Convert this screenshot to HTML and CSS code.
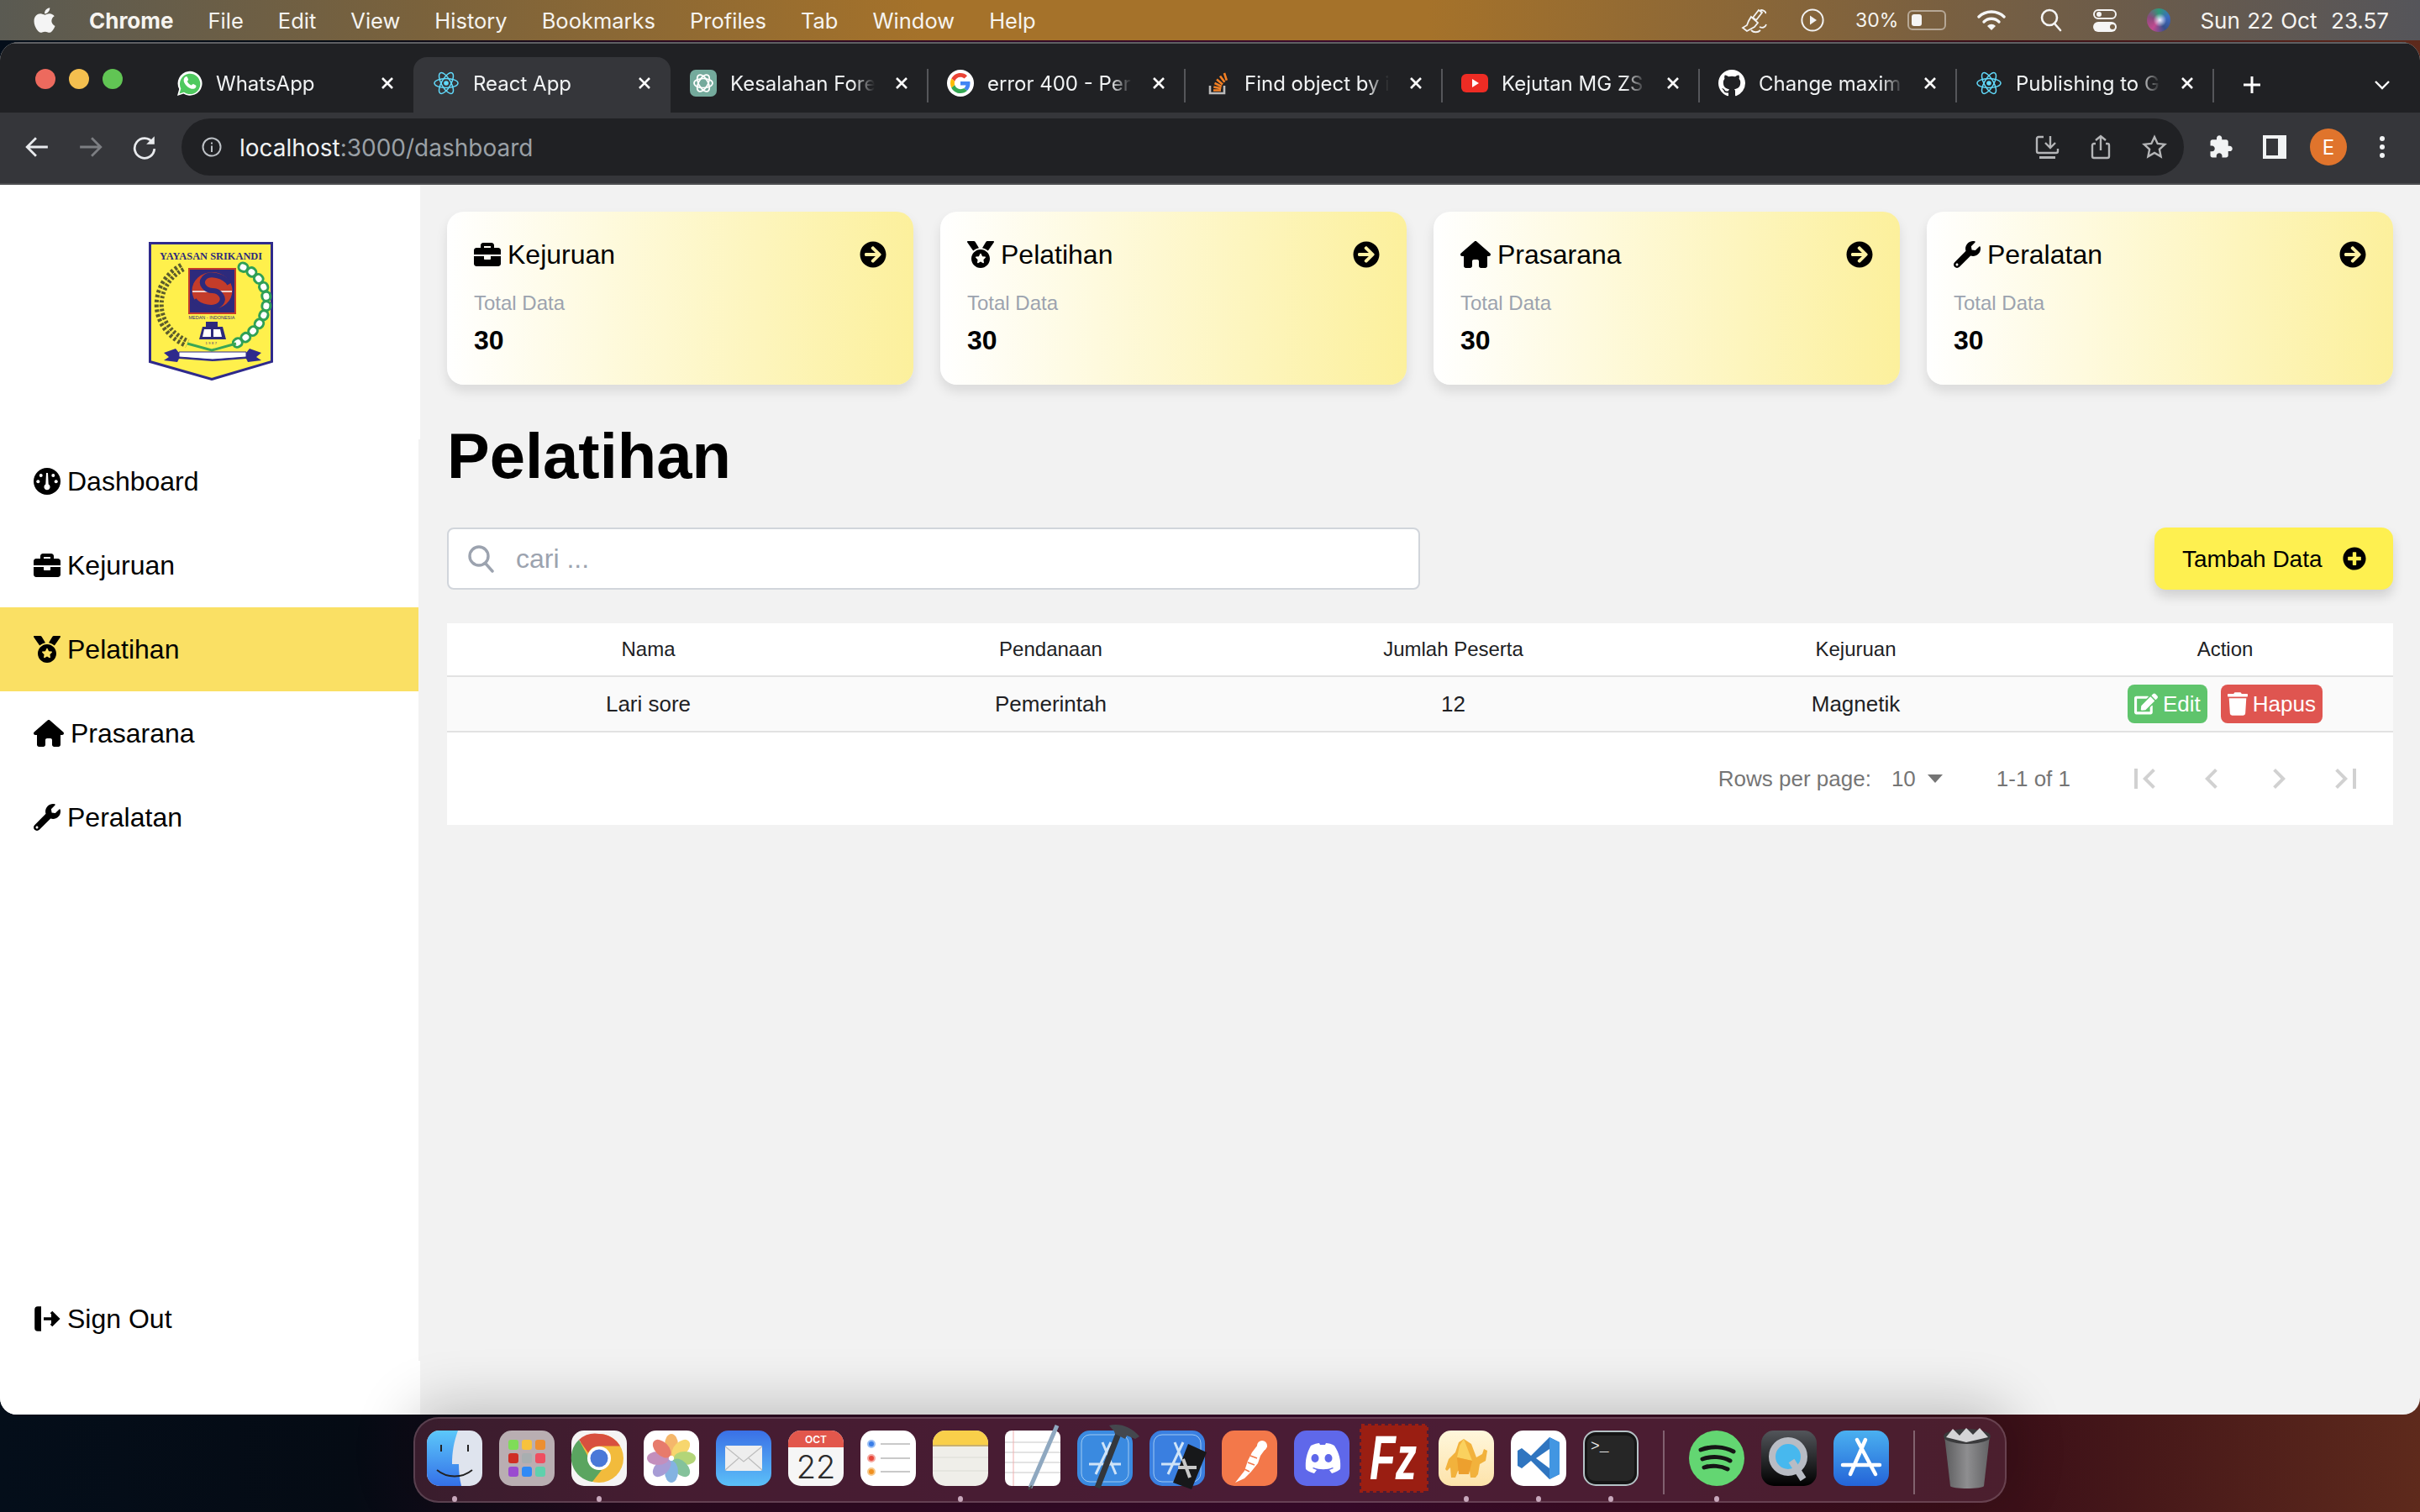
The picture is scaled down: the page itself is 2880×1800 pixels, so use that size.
FILE: index.html
```html
<!DOCTYPE html>
<html lang="en">
<head>
    <meta charset="UTF-8">
    <meta name="viewport" content="width=device-width, initial-scale=1.0">
    <title>React App</title>
    <link rel="stylesheet" href="styles.css">
</head>
<body>
    <svg class="icon-defs" xmlns="http://www.w3.org/2000/svg">
        <symbol id="i-briefcase" viewBox="0 0 512 512"><path d="M320 336c0 8.84-7.16 16-16 16h-96c-8.84 0-16-7.16-16-16v-48H0v144c0 25.6 22.4 48 48 48h416c25.6 0 48-22.4 48-48V288H320v48zm144-208h-80V80c0-25.6-22.4-48-48-48H176c-25.6 0-48 22.4-48 48v48H48c-25.6 0-48 22.4-48 48v80h512v-80c0-25.6-22.4-48-48-48zm-144 0H192V96h128v32z"/></symbol>
        <symbol id="i-medal" viewBox="0 0 512 512"><path d="M223.75 130.75L154.62 15.54A31.997 31.997 0 0 0 127.18 0H16.03C3.08 0-4.5 14.57 2.92 25.18l111.27 158.96c29.72-27.77 67.52-46.83 109.56-53.39zM495.97 0H384.82c-11.24 0-21.66 5.9-27.44 15.54l-69.13 115.21c42.04 6.56 79.84 25.62 109.56 53.38L509.08 25.18C516.5 14.57 508.92 0 495.97 0zM256 160c-97.2 0-176 78.8-176 176s78.8 176 176 176 176-78.8 176-176-78.8-176-176-176zm92.52 157.26l-37.93 36.96 8.97 52.22c1.6 9.36-8.26 16.51-16.65 12.09L256 393.88l-46.9 24.65c-8.4 4.45-18.25-2.74-16.65-12.09l8.97-52.22-37.93-36.96c-6.82-6.64-3.05-18.23 6.35-19.59l52.43-7.64 23.43-47.52c2.11-4.28 6.19-6.39 10.28-6.39 4.11 0 8.22 2.14 10.33 6.39l23.43 47.52 52.43 7.64c9.4 1.36 13.17 12.95 6.35 19.59z"/></symbol>
        <symbol id="i-home" viewBox="0 0 576 512"><path d="M575.8 255.5c0 18-15 32.1-32 32.1h-32l.7 160.2c0 2.7-.2 5.4-.5 8.1V472c0 22.1-17.9 40-40 40H456c-1.1 0-2.2 0-3.3-.1c-1.4 .1-2.8 .1-4.2 .1H416 392c-22.1 0-40-17.9-40-40V448 384c0-17.7-14.3-32-32-32H256c-17.7 0-32 14.3-32 32v64 24c0 22.1-17.9 40-40 40H160 128.100c-1.5 0-3-.1-4.5-.2c-1.2 .1-2.4 .2-3.6 .2H104c-22.1 0-40-17.900-40-40V360c0-.9 0-1.900 .1-2.800V287.600H32c-18 0-32-14-32-32.100c0-9 3-17 10-24L266.400 8c7-7 15-8 22-8s15 2 21 7L564.800 231.500c8 7 12 15 11 24z"/></symbol>
        <symbol id="i-wrench" viewBox="0 0 512 512"><path d="M507.73 109.1c-2.24-9.03-13.54-12.09-20.12-5.51l-74.36 74.36-67.88-11.31-11.31-67.88 74.36-74.36c6.62-6.62 3.43-17.9-5.66-20.16-47.38-11.74-99.55.91-136.58 37.93-39.64 39.64-50.55 97.1-34.05 147.2L18.74 402.76c-24.99 24.99-24.99 65.51 0 90.5 24.99 24.99 65.51 24.99 90.5 0l213.21-213.21c50.12 16.71 107.47 5.68 147.37-34.22 37.07-37.07 49.7-89.32 37.91-136.73zM64 472c-13.25 0-24-10.75-24-24 0-13.26 10.75-24 24-24s24 10.74 24 24c0 13.25-10.75 24-24 24z"/></symbol>
        <symbol id="i-arrow" viewBox="0 0 512 512"><path d="M256 8c137 0 248 111 248 248S393 504 256 504 8 393 8 256 119 8 256 8zm-28.9 143.6l75.5 72.4H120c-13.3 0-24 10.7-24 24v16c0 13.3 10.7 24 24 24h182.6l-75.5 72.4c-9.7 9.3-9.9 24.8-.4 34.3l11 10.9c9.4 9.4 24.6 9.4 33.9 0L404.3 273c9.4-9.4 9.4-24.6 0-33.9L271 106.3c-9.4-9.4-24.6-9.4-33.9 0l-11 10.9c-9.5 9.6-9.3 25.1.4 34.4z"/></symbol>
        <symbol id="i-atom" viewBox="0 0 32 32"><g fill="none" stroke="#61dafb" stroke-width="1.5"><ellipse cx="16" cy="16" rx="14" ry="5.5"/><ellipse cx="16" cy="16" rx="14" ry="5.5" transform="rotate(60 16 16)"/><ellipse cx="16" cy="16" rx="14" ry="5.5" transform="rotate(120 16 16)"/></g><circle cx="16" cy="16" r="2.8" fill="#61dafb"/></symbol>
        <symbol id="i-close" viewBox="0 0 18 18"><path d="M3 3l12 12M15 3L3 15" fill="none" stroke="#fff" stroke-width="2.6"/></symbol>
    </svg>

    <header class="menubar">
        <div class="menu-left">
            <svg class="apple" viewBox="0 0 384 512"><path d="M318.7 268.7c-.2-36.7 16.4-64.4 50-84.8-18.8-26.9-47.2-41.7-84.7-44.6-35.5-2.8-74.3 20.7-88.5 20.7-15 0-49.4-19.7-76.4-19.7C63.3 141.2 4 184.8 4 273.5q0 39.3 14.4 81.2c12.8 36.7 59 126.7 107.2 125.2 25.2-.6 43-17.9 75.8-17.9 31.8 0 48.3 17.9 76.4 17.9 48.6-.7 90.4-82.5 102.6-119.3-65.2-30.7-61.7-90-61.7-91.9zm-56.6-164.2c27.3-32.4 24.8-61.9 24-72.5-24.1 1.4-52 16.4-67.9 34.9-17.5 19.8-27.8 44.3-25.6 71.9 26.1 2 49.9-11.4 69.5-34.3z"/></svg>
            <span class="menu-app">Chrome</span>
            <span>File</span>
            <span>Edit</span>
            <span>View</span>
            <span>History</span>
            <span>Bookmarks</span>
            <span>Profiles</span>
            <span>Tab</span>
            <span>Window</span>
            <span>Help</span>
        </div>
        <div class="menu-right">
            <svg class="status-broom" viewBox="0 0 32 32" fill="none" stroke="#f2f2f2" stroke-width="1.8"><path d="M14 13l7-9 4 3-7 9zM12 12l8 7-4 5-9 5-5-4 5-3 2-5zM23 4c4 0 7 2 6 4M22 24c4 2 7 0 8-3M12 28c3 3 8 3 11 0"/></svg>
            <svg class="status-play" viewBox="0 0 28 28"><circle cx="14" cy="14" r="12.6" fill="none" stroke="#f2f2f2" stroke-width="2"/><path d="M11 8.5l8 5.5-8 5.5z" fill="#f2f2f2"/></svg>
            <div class="battery-group">
                <span>30%</span>
                <div class="battery"><div class="battery-level"></div></div>
            </div>
            <svg class="status-wifi" viewBox="0 0 34 26"><path d="M2 9c8-8 22-8 30 0" fill="none" stroke="#f5f5f5" stroke-width="3.4" stroke-linecap="round"/><path d="M8 15c5-5 13-5 18 0" fill="none" stroke="#f5f5f5" stroke-width="3.4" stroke-linecap="round"/><path d="M12 20c3-3 7-3 10 0l-5 5z" fill="#f5f5f5"/></svg>
            <svg class="status-search" viewBox="0 0 26 28" fill="none" stroke="#f5f5f5" stroke-width="2.6"><circle cx="11" cy="11" r="9"/><path d="M17 18l7 8" stroke-linecap="round"/></svg>
            <div class="status-control">
                <div class="toggle-off"><i></i></div>
                <div class="toggle-on"><i></i></div>
            </div>
            <div class="status-siri"></div>
            <span class="status-time">Sun 22 Oct&nbsp;&nbsp;23.57</span>
        </div>
    </header>

    <div class="window">
        <div class="tabstrip">
            <div class="lights"><i class="light-red"></i><i class="light-yellow"></i><i class="light-green"></i></div>
            <div class="tab">
                <svg class="favicon" viewBox="0 0 32 32"><path d="M2 31l2.200-8A14.500 14.500 0 1 1 9.400 28.600z" fill="#fff"/><path d="M4.500 28.500l1.800-6A12.200 12.200 0 1 1 10 26.800z" fill="#4fc95f"/><path d="M11.500 8.800c1-1 2-.8 2.400 0l1.200 2.800c.2.600-.8 1.800-1.200 2.400 1 2 2.800 3.600 4.800 4.600.8-.6 1.700-1.800 2.400-1.600l2.800 1.400c.8.500.6 1.800 0 2.800-1.400 1.800-4 2-6.400 1-3.400-1.400-6-4-7.400-7.200-1-2.500-.4-5 1.400-6.600z" fill="#fff"/></svg>
                <span class="tab-title">WhatsApp</span>
                <svg class="tab-close"><use href="#i-close"/></svg>
            </div>
            <div class="tab tab-active">
                <svg class="favicon"><use href="#i-atom"/></svg>
                <span class="tab-title">React App</span>
                <svg class="tab-close"><use href="#i-close"/></svg>
            </div>
            <div class="tab tab-sep">
                <svg class="favicon" viewBox="0 0 32 32"><rect width="32" height="32" rx="7" fill="#74aa9c"/><g fill="none" stroke="#fff" stroke-width="1.700"><ellipse cx="16" cy="16" rx="11" ry="5.500"/><ellipse cx="16" cy="16" rx="11" ry="5.500" transform="rotate(60 16 16)"/><ellipse cx="16" cy="16" rx="11" ry="5.500" transform="rotate(120 16 16)"/></g></svg>
                <span class="tab-title">Kesalahan Fore</span>
                <svg class="tab-close"><use href="#i-close"/></svg>
            </div>
            <div class="tab tab-sep">
                <svg class="favicon" viewBox="-8 -8 64 64"><circle cx="24" cy="24" r="32" fill="#fff"/><path fill="#EA4335" d="M24 9.500c3.540 0 6.710 1.220 9.210 3.600l6.850-6.850C35.900 2.380 30.470 0 24 0 14.620 0 6.510 5.380 2.560 13.220l7.980 6.190C12.430 13.720 17.740 9.500 24 9.500z"/><path fill="#4285F4" d="M46.980 24.550c0-1.570-.15-3.090-.38-4.550H24v9.020h12.940c-.58 2.960-2.260 5.480-4.780 7.180l7.730 6c4.510-4.180 7.090-10.360 7.090-17.650z"/><path fill="#FBBC05" d="M10.530 28.590c-.48-1.450-.76-2.990-.76-4.590s.27-3.140.76-4.590l-7.980-6.190C.92 16.460 0 20.120 0 24c0 3.880.92 7.540 2.560 10.780l7.970-6.190z"/><path fill="#34A853" d="M24 48c6.480 0 11.930-2.130 15.890-5.810l-7.730-6c-2.150 1.450-4.920 2.300-8.160 2.300-6.260 0-11.570-4.220-13.470-9.910l-7.980 6.190C6.510 42.620 14.620 48 24 48z"/></svg>
                <span class="tab-title">error 400 - Per</span>
                <svg class="tab-close"><use href="#i-close"/></svg>
            </div>
            <div class="tab tab-sep">
                <svg class="favicon" viewBox="0 0 32 32"><path d="M7 19v9h17v-9" fill="none" stroke="#bcbbbb" stroke-width="2.600"/><path d="M11 24.500h9M11.300 20.500l9 1.800M12.500 16l8.300 3.900M15 11.500l7 5.900M19 7.500l5.400 7.300M24 4l2.800 8.600" fill="none" stroke="#f48024" stroke-width="2.600"/></svg>
                <span class="tab-title">Find object by i</span>
                <svg class="tab-close"><use href="#i-close"/></svg>
            </div>
            <div class="tab tab-sep">
                <svg class="favicon" viewBox="0 0 32 32"><rect y="5" width="32" height="22" rx="6" fill="#ee2c24"/><path d="M13 11l8 5-8 5z" fill="#fff"/></svg>
                <span class="tab-title">Kejutan MG ZS</span>
                <svg class="tab-close"><use href="#i-close"/></svg>
            </div>
            <div class="tab tab-sep">
                <svg class="favicon" viewBox="0 0 16 16"><path fill="#fff" d="M8 0C3.580 0 0 3.580 0 8c0 3.540 2.290 6.530 5.470 7.590.4.070.55-.17.55-.38 0-.19-.01-.82-.01-1.490-2.010.37-2.530-.49-2.690-.94-.09-.23-.48-.94-.82-1.130-.28-.15-.68-.52-.01-.53.63-.01 1.080.58 1.230.82.72 1.210 1.870.87 2.330.66.07-.52.28-.87.51-1.070-1.780-.2-3.640-.89-3.640-3.950 0-.87.31-1.590.82-2.150-.08-.2-.36-1.020.08-2.120 0 0 .67-.21 2.200.82.64-.18 1.320-.27 2-.27.68 0 1.360.09 2 .27 1.530-1.040 2.200-.82 2.200-.82.44 1.100.16 1.920.08 2.120.51.56.82 1.270.82 2.150 0 3.070-1.870 3.750-3.650 3.950.29.25.54.73.54 1.480 0 1.070-.01 1.930-.01 2.200 0 .21.15.46.55.38A8.013 8.013 0 0016 8c0-4.420-3.580-8-8-8z"/></svg>
                <span class="tab-title">Change maxim</span>
                <svg class="tab-close"><use href="#i-close"/></svg>
            </div>
            <div class="tab tab-sep">
                <svg class="favicon"><use href="#i-atom"/></svg>
                <span class="tab-title">Publishing to G</span>
                <svg class="tab-close"><use href="#i-close"/></svg>
            </div>
            <div class="tab-new"><svg viewBox="0 0 24 24"><path d="M12 2v20M2 12h20" stroke="#fff" stroke-width="3"/></svg></div>
            <div class="tab-list"><svg viewBox="0 0 20 12"><path d="M2 2l8 8 8-8" fill="none" stroke="#fff" stroke-width="2.400"/></svg></div>
        </div>

        <div class="toolbar">
            <div class="tool-btn"><svg viewBox="0 0 28 28" fill="none" stroke="#e8eaed" stroke-width="2.600"><path d="M26 14H3M13 4L3 14l10 10"/></svg></div>
            <div class="tool-btn"><svg viewBox="0 0 28 28" fill="none" stroke="#7c7e82" stroke-width="2.600"><path d="M2 14h23M15 4l10 10-10 10"/></svg></div>
            <div class="tool-btn"><svg viewBox="0 0 28 28" fill="none" stroke="#e8eaed" stroke-width="2.600"><path d="M23 9a11 11 0 1 0 2 7"/><path d="M25 2v9h-9" fill="#e8eaed" stroke="none"/></svg></div>
            <div class="addressbar">
                <svg class="addr-info" viewBox="0 0 24 24"><circle cx="12" cy="12" r="10.500" fill="none" stroke="#bdc1c6" stroke-width="2"/><path d="M11 10.500h2V18h-2zM11 6.500h2v2h-2z" fill="#bdc1c6"/></svg>
                <div class="addr-text">localhost<span class="addr-muted">:3000/dashboard</span></div>
                <div class="addr-actions">
                    <div class="tool-btn"><svg viewBox="0 0 30 30" fill="none" stroke="#b4b5b7" stroke-width="2.400"><path d="M11 3H5a2 2 0 0 0-2 2v15a2 2 0 0 0 2 2h21a2 2 0 0 0 2-2v-3M19 2v13M13 10l6 6 6-6"/><path d="M6 26h19v3H6z" fill="#b4b5b7" stroke="none"/></svg></div>
                    <div class="tool-btn"><svg viewBox="0 0 30 30" fill="none" stroke="#b4b5b7" stroke-width="2.400"><path d="M9 11H7a2 2 0 0 0-2 2v13a2 2 0 0 0 2 2h16a2 2 0 0 0 2-2V13a2 2 0 0 0-2-2h-2M15 19V2M9 7l6-5 6 5"/></svg></div>
                    <div class="tool-btn"><svg viewBox="0 0 30 30" fill="none" stroke="#b4b5b7" stroke-width="2.400"><path d="M15 3l3.700 7.900 8.600 1-6.400 5.900 1.700 8.500-7.600-4.300-7.600 4.300 1.700-8.500-6.400-5.900 8.600-1z"/></svg></div>
                </div>
            </div>
            <div class="tool-right">
                <div class="tool-btn"><svg viewBox="0 0 24 24"><path fill="#f1f3f4" d="M20.500 11H19V7c0-1.100-.9-2-2-2h-4V3.500C13 2.120 11.880 1 10.500 1S8 2.120 8 3.500V5H4c-1.100 0-1.990.9-1.990 2v3.800H3.500c1.490 0 2.700 1.210 2.700 2.700s-1.210 2.700-2.700 2.700H2V20c0 1.100.9 2 2 2h3.800v-1.500c0-1.490 1.210-2.700 2.700-2.700 1.490 0 2.700 1.210 2.700 2.700V22H17c1.100 0 2-.9 2-2v-4h1.500c1.380 0 2.500-1.120 2.500-2.500S21.880 11 20.500 11z"/></svg></div>
                <div class="tool-btn"><div class="sidepanel"></div></div>
                <div class="tool-btn"><div class="avatar">E</div></div>
                <div class="tool-btn"><div class="kebab"><i></i><i></i><i></i></div></div>
            </div>
        </div>

        <div class="page">
            <aside class="sidebar">
                <div class="side-logo">
                    <svg class="logo" viewBox="0 0 148 165">
                        <path d="M1.500 1.500h145v141l-71.500 21-73.500-21z" fill="#fff04c" stroke="#2f2a8c" stroke-width="3"/>
                        <text x="74" y="21" class="logo-title" text-anchor="middle">YAYASAN SRIKANDI</text>
                        <path d="M40 30C4 50 0 100 46 121" fill="none" stroke="#5c5c2c" stroke-width="11" stroke-dasharray="3 2.500"/>
                        <path d="M40 30C4 50 0 100 46 121" fill="none" stroke="#fff04c" stroke-width="1"/>
                        <path d="M112 30c34 14 44 62 -8 91" fill="none" stroke="#2fa055" stroke-width="13" stroke-dasharray="1 10.500" stroke-linecap="round"/>
                        <path d="M112 30c34 14 44 62 -8 91" fill="none" stroke="#fff" stroke-width="7" stroke-dasharray="1 10.500" stroke-linecap="round"/>
                        <rect x="48" y="32" width="55" height="53" fill="#2d2a7c" stroke="#c43c2a" stroke-width="2"/>
                        <ellipse cx="75.500" cy="58" rx="24" ry="22" fill="#c43c2a"/>
                        <path d="M52 59h47" stroke="#fff" stroke-width="1.500"/>
                        <path d="M96 50C90 40 72 36 66 43s2 15 10 15 16 9 9 16-24 4-31-5" fill="none" stroke="#2d2a7c" stroke-width="6"/>
                        <text x="75" y="92" class="logo-small" text-anchor="middle">MEDAN - INDONESIA</text>
                        <path d="M68 95h14v6h6l4 15H60l4-15h4z" fill="#2d2a7c"/>
                        <path d="M66 104h8v9h-10zM77 104h8l2 9H77z" fill="#fff"/>
                        <text x="75" y="122" class="logo-tiny" text-anchor="middle">1987</text>
                        <path d="M46 121l29 8 29-8" fill="none" stroke="#3aa655" stroke-width="3"/>
                        <path d="M18 132l14-5 4 5 40 2 40-2 4-5 14 5-6 5 6 4-16 2-2-4-40 3-40-3-2 4-16-2 6-4z" fill="#2f2a8c"/>
                        <path d="M36 131h80v6l-40 3-40-3z" fill="#fff" stroke="#2f2a8c" stroke-width="1"/>
                    </svg>
                </div>
                <nav class="side-nav">
                    <a class="nav-link">
                        <svg class="nav-icon" viewBox="0 0 32 32"><circle cx="16" cy="16" r="16"/><g fill="#fff"><circle cx="8.700" cy="9" r="2"/><circle cx="23.300" cy="9" r="2"/><circle cx="5.300" cy="16.300" r="2"/><circle cx="26.700" cy="16.300" r="2"/><path d="M15 6h2l.7 13.500a3.600 3.600 0 1 1-3.400 0z"/></g></svg>
                        Dashboard
                    </a>
                    <a class="nav-link"><svg class="nav-icon"><use href="#i-briefcase"/></svg>Kejuruan</a>
                    <a class="nav-link nav-active"><svg class="nav-icon"><use href="#i-medal"/></svg>Pelatihan</a>
                    <a class="nav-link"><svg class="nav-icon nav-icon-wide"><use href="#i-home"/></svg>Prasarana</a>
                    <a class="nav-link"><svg class="nav-icon"><use href="#i-wrench"/></svg>Peralatan</a>
                    <a class="nav-link nav-bottom">
                        <svg class="nav-icon" viewBox="0 0 32 32" fill="none" stroke="#000" stroke-width="3.600"><path d="M9 3H5a2 2 0 0 0-2 2v22a2 2 0 0 0 2 2h4"/><path d="M12 16h17M21 8l8 8-8 8"/></svg>
                        Sign Out
                    </a>
                </nav>
                <div class="side-foot"></div>
            </aside>

            <main class="content">
                <section class="cards">
                    <div class="card">
                        <div class="card-head">
                            <div class="card-title"><svg class="nav-icon"><use href="#i-briefcase"/></svg>Kejuruan</div>
                            <svg class="nav-icon"><use href="#i-arrow"/></svg>
                        </div>
                        <p class="card-label">Total Data</p>
                        <p class="card-value">30</p>
                    </div>
                    <div class="card">
                        <div class="card-head">
                            <div class="card-title"><svg class="nav-icon"><use href="#i-medal"/></svg>Pelatihan</div>
                            <svg class="nav-icon"><use href="#i-arrow"/></svg>
                        </div>
                        <p class="card-label">Total Data</p>
                        <p class="card-value">30</p>
                    </div>
                    <div class="card">
                        <div class="card-head">
                            <div class="card-title"><svg class="nav-icon nav-icon-wide"><use href="#i-home"/></svg>Prasarana</div>
                            <svg class="nav-icon"><use href="#i-arrow"/></svg>
                        </div>
                        <p class="card-label">Total Data</p>
                        <p class="card-value">30</p>
                    </div>
                    <div class="card">
                        <div class="card-head">
                            <div class="card-title"><svg class="nav-icon"><use href="#i-wrench"/></svg>Peralatan</div>
                            <svg class="nav-icon"><use href="#i-arrow"/></svg>
                        </div>
                        <p class="card-label">Total Data</p>
                        <p class="card-value">30</p>
                    </div>
                </section>

                <h1 class="page-title">Pelatihan</h1>

                <div class="actions">
                    <div class="search">
                        <svg class="search-icon" viewBox="0 0 32 34" fill="none" stroke="#9ca3af" stroke-width="3.400"><circle cx="14" cy="14" r="11"/><path d="M22 23l8 9" stroke-linecap="round"/></svg>
                        <span class="search-text">cari ...</span>
                    </div>
                    <button class="add-btn">
                        Tambah Data
                        <svg class="add-icon" viewBox="0 0 512 512"><path d="M256 8C119 8 8 119 8 256s111 248 248 248 248-111 248-248S393 8 256 8zm144 276c0 6.600-5.400 12-12 12h-92v92c0 6.600-5.400 12-12 12h-56c-6.600 0-12-5.400-12-12v-92h-92c-6.600 0-12-5.400-12-12v-56c0-6.600 5.400-12 12-12h92v-92c0-6.600 5.400-12 12-12h56c6.600 0 12 5.400 12 12v92h92c6.600 0 12 5.400 12 12v56z"/></svg>
                    </button>
                </div>

                <section class="table">
                    <div class="table-row table-head">
                        <div>Nama</div>
                        <div>Pendanaan</div>
                        <div>Jumlah Peserta</div>
                        <div>Kejuruan</div>
                        <div>Action</div>
                    </div>
                    <div class="table-row table-body">
                        <div>Lari sore</div>
                        <div>Pemerintah</div>
                        <div>12</div>
                        <div>Magnetik</div>
                        <div class="row-actions">
                            <span class="btn-edit"><svg viewBox="0 0 576 512"><path d="M402.600 83.200l90.200 90.200c3.800 3.800 3.800 10 0 13.800L274.400 405.600l-92.800 10.300c-12.400 1.400-22.900-9.100-21.500-21.500l10.300-92.800L388.800 83.200c3.800-3.800 10-3.800 13.800 0zm162-22.900l-48.800-48.800c-15.200-15.200-39.900-15.200-55.200 0l-35.400 35.400c-3.800 3.800-3.800 10 0 13.800l90.200 90.200c3.800 3.800 10 3.800 13.800 0l35.400-35.400c15.200-15.300 15.200-40 0-55.200zM384 346.200V448H64V128h229.800c3.200 0 6.200-1.300 8.500-3.500l40-40c7.600-7.600 2.200-20.500-8.500-20.500H48C21.500 64 0 85.500 0 112v352c0 26.500 21.500 48 48 48h352c26.500 0 48-21.500 48-48V306.200c0-10.700-12.900-16-20.500-8.500l-40 40c-2.200 2.300-3.500 5.300-3.500 8.500z"/></svg>Edit</span>
                            <span class="btn-delete"><svg viewBox="0 0 448 512"><path d="M432 32H312l-9.400-18.700A24 24 0 0 0 281.100 0H166.800a23.720 23.720 0 0 0-21.400 13.300L136 32H16A16 16 0 0 0 0 48v32a16 16 0 0 0 16 16h416a16 16 0 0 0 16-16V48a16 16 0 0 0-16-16zM53.200 467a48 48 0 0 0 47.900 45h245.800a48 48 0 0 0 47.900-45L416 128H32z"/></svg>Hapus</span>
                        </div>
                    </div>
                    <div class="pager">
                        <span>Rows per page:</span>
                        <span class="pager-size">10</span>
                        <i class="pager-caret"></i>
                        <span class="pager-range">1-1 of 1</span>
                        <div class="pager-btns">
                            <svg viewBox="0 0 24 24"><path d="M18.410 16.590L13.820 12l4.590-4.590L17 6l-6 6 6 6zM6 6h2v12H6z"/></svg>
                            <svg viewBox="0 0 24 24"><path d="M15.410 7.410L14 6l-6 6 6 6 1.410-1.410L10.830 12z"/></svg>
                            <svg viewBox="0 0 24 24"><path d="M10 6L8.590 7.410 13.170 12l-4.580 4.590L10 18l6-6z"/></svg>
                            <svg viewBox="0 0 24 24"><path d="M5.590 7.410L10.180 12l-4.590 4.590L7 18l6-6-6-6zM16 6h2v12h-2z"/></svg>
                        </div>
                    </div>
                </section>
            </main>
        </div>
    </div>

    <footer class="dock">
        <div class="dock-item has-dot"><svg viewBox="0 0 66 66"><defs><linearGradient id="fd" x1="0" y1="0" x2="0" y2="1"><stop offset="0" stop-color="#5cc8fa"/><stop offset="1" stop-color="#3470e8"/></linearGradient></defs><rect width="66" height="66" rx="15" fill="#dfe4ee"/><path d="M15 0h22c-5 14-7 26-7 40h8c0 9 1 18 3 26H15A15 15 0 0 1 0 51V15A15 15 0 0 1 15 0z" fill="url(#fd)"/><path d="M17 17v8M49 17v8" stroke="#222" stroke-width="2"/><path d="M12 47c12 10 30 10 42 0" fill="none" stroke="#222" stroke-width="1.800"/></svg></div>
        <div class="dock-item"><svg viewBox="0 0 66 66"><rect width="66" height="66" rx="15" fill="#b9aeb2"/><g><rect x="11" y="11" width="12" height="12" rx="3" fill="#7fdc58"/><rect x="27" y="11" width="12" height="12" rx="3" fill="#f7c23c"/><rect x="43" y="11" width="12" height="12" rx="3" fill="#ec8f32"/><rect x="11" y="27" width="12" height="12" rx="3" fill="#cf2e25"/><rect x="27" y="27" width="12" height="12" rx="3" fill="#a8aeb0"/><rect x="43" y="27" width="12" height="12" rx="3" fill="#ef4e60"/><rect x="11" y="43" width="12" height="12" rx="3" fill="#9a4bd0"/><rect x="27" y="43" width="12" height="12" rx="3" fill="#2f8af5"/><rect x="43" y="43" width="12" height="12" rx="3" fill="#5fd0ac"/></g></svg></div>
        <div class="dock-item has-dot"><svg viewBox="0 0 66 66"><rect width="66" height="66" rx="15" fill="#f5f4f4"/><circle cx="33" cy="33" r="29" fill="#f2bb3c"/><path d="M33 4a29 29 0 0 1 25 14.500H33a14.500 14.500 0 0 0-13 8L9 11A29 29 0 0 1 33 4z" fill="#d8503f"/><path d="M9 11l13 24a14 14 0 0 0 14 12L25 61A29 29 0 0 1 9 11z" fill="#5aa560"/><circle cx="33" cy="33" r="14" fill="#fff"/><circle cx="33" cy="33" r="10.500" fill="#4a78d8"/></svg></div>
        <div class="dock-item"><svg viewBox="0 0 66 66"><rect width="66" height="66" rx="15" fill="#fff"/><g opacity=".75"><ellipse cx="33" cy="17" rx="8" ry="13" fill="#f2a03a"/><ellipse cx="33" cy="17" rx="8" ry="13" fill="#f5c93e" transform="rotate(45 33 33)"/><ellipse cx="33" cy="17" rx="8" ry="13" fill="#9ac74c" transform="rotate(90 33 33)"/><ellipse cx="33" cy="17" rx="8" ry="13" fill="#5cae7a" transform="rotate(135 33 33)"/><ellipse cx="33" cy="17" rx="8" ry="13" fill="#5a9ad8" transform="rotate(180 33 33)"/><ellipse cx="33" cy="17" rx="8" ry="13" fill="#8a7cc8" transform="rotate(225 33 33)"/><ellipse cx="33" cy="17" rx="8" ry="13" fill="#b06aa8" transform="rotate(270 33 33)"/><ellipse cx="33" cy="17" rx="8" ry="13" fill="#e0503c" transform="rotate(315 33 33)"/></g></svg></div>
        <div class="dock-item"><svg viewBox="0 0 66 66"><defs><linearGradient id="ml" x1="0" y1="0" x2="0" y2="1"><stop offset="0" stop-color="#3a70e6"/><stop offset="1" stop-color="#5cc0f8"/></linearGradient></defs><rect width="66" height="66" rx="15" fill="url(#ml)"/><rect x="11" y="18" width="44" height="30" rx="2" fill="#eeeeee"/><path d="M11 19l22 18 22-18M11 47l16-14M55 47L39 33" fill="none" stroke="#bdbdbd" stroke-width="1.200"/></svg></div>
        <div class="dock-item"><svg viewBox="0 0 66 66"><rect width="66" height="66" rx="15" fill="#f6f6f6"/><path d="M15 0h36a15 15 0 0 1 15 15v5H0v-5A15 15 0 0 1 15 0z" fill="#e2574c"/><text x="33" y="15" class="cal-month" text-anchor="middle">OCT</text><text x="33" y="57" class="cal-day" text-anchor="middle">22</text></svg></div>
        <div class="dock-item"><svg viewBox="0 0 66 66"><rect width="66" height="66" rx="15" fill="#fff"/><circle cx="13" cy="16" r="4" fill="#3a7ee8" stroke="#9cc0f4" stroke-width="2"/><circle cx="13" cy="33" r="4" fill="#e8483c" stroke="#f4a8a0" stroke-width="2"/><circle cx="13" cy="49" r="4" fill="#f09020" stroke="#f6c88c" stroke-width="2"/><path d="M24 16h35M24 33h35M24 49h35" stroke="#b8b8b8" stroke-width="1.500"/></svg></div>
        <div class="dock-item has-dot"><svg viewBox="0 0 66 66"><rect width="66" height="66" rx="15" fill="#efeee9"/><path d="M15 0h36a15 15 0 0 1 15 15v2H0v-2A15 15 0 0 1 15 0z" fill="#f9cf4a"/><rect y="17" width="66" height="2" fill="#c8b070"/><path d="M0 32h66M0 48h66" stroke="#dcdcd6" stroke-width="1.200"/></svg></div>
        <div class="dock-item"><svg viewBox="0 0 66 66"><rect width="66" height="66" rx="8" fill="#fff"/><path d="M0 14h66M0 26h66M0 38h66M0 50h66" stroke="#c8c8c8" stroke-width="1.200"/><path d="M10 0v66" stroke="#f0b0b0"/><path d="M62-6L30 68" stroke="#8fa8c0" stroke-width="5"/><path d="M32 66l-4 4" stroke="#444" stroke-width="2"/></svg></div>
        <div class="dock-item"><svg viewBox="0 0 66 66"><rect width="66" height="66" rx="15" fill="#3a8ae0"/><rect x="5" y="5" width="56" height="56" rx="10" fill="none" stroke="#9fcaf2" stroke-width="1"/><path d="M30 14l16 38M40 14L22 52M14 40h38" stroke="#cfe4f8" stroke-width="3"/><path d="M52-4L24 68" stroke="#33373c" stroke-width="7"/><path d="M38-6c12-3 26 1 36 13l-5 3-10-4-2 4-12-6-1-3z" fill="#44484e"/></svg></div>
        <div class="dock-item"><svg viewBox="0 0 66 66"><rect width="66" height="66" rx="15" fill="#3a7fe0"/><rect x="5" y="5" width="56" height="56" rx="10" fill="none" stroke="#9fcaf2" stroke-width="1"/><path d="M30 14l16 38M40 14L22 52M14 40h38" stroke="#cfe4f8" stroke-width="3"/><path d="M46 16l22 10-18 44-22-8z" fill="#17181a"/><path d="M40 34l8 22M34 44h22" stroke="#c8c8c8" stroke-width="4"/></svg></div>
        <div class="dock-item"><svg viewBox="0 0 66 66"><rect width="66" height="66" rx="15" fill="#f3784a"/><path d="M46 13l8 6-8 11-3 9-8 10-8 8-11 5 11-14 4-12 5-10z" fill="#fff"/><circle cx="48" cy="18" r="6" fill="#fff"/><path d="M34 30l8 3M31 38l8 3M27 46l6 3" stroke="#f3784a" stroke-width="1.600"/></svg></div>
        <div class="dock-item"><svg viewBox="0 0 66 66"><rect width="66" height="66" rx="15" fill="#5f68ea"/><path d="M20 18c4-2 8-3 10-3l1 2h6l1-2c3 0 7 1 10 3 6 9 8 18 7 28-4 3-7 4-10 5l-3-4 5-2-1-1c-7 3-15 3-23 0l-1 1 5 2-3 4c-3-1-7-2-10-5-1-10 1-19 6-28z" fill="#fff"/><ellipse cx="25" cy="33" rx="4.500" ry="5" fill="#5f68ea"/><ellipse cx="41" cy="33" rx="4.500" ry="5" fill="#5f68ea"/></svg></div>
        <div class="dock-item dock-big"><svg viewBox="0 0 82 82"><rect x="2" y="2" width="78" height="78" fill="#9a1e12" stroke="#9a1e12" stroke-width="4" stroke-dasharray="4 4"/><text x="40" y="66" class="fz-text" text-anchor="middle" textLength="56" lengthAdjust="spacingAndGlyphs">Fz</text></svg></div>
        <div class="dock-item has-dot"><svg viewBox="0 0 66 66"><defs><linearGradient id="tp" x1="0" y1="0" x2="0" y2="1"><stop offset="0" stop-color="#fff7dc"/><stop offset="1" stop-color="#fde3aa"/></linearGradient></defs><rect width="66" height="66" rx="15" fill="url(#tp)"/><path d="M30 10l9 6 6 16 7-4 2-6 4 2-2 12-7 4-2 12-3 4h-6l-1-8H23l-3 8h-5l-1-12-4 4-2-2 4-12 8-8 4-12z" fill="#f2b23c"/><path d="M30 10l10 26-18-4 3-14z" fill="#fad15e"/><path d="M22 32l18 4-4 16H24z" fill="#eda02e"/></svg></div>
        <div class="dock-item has-dot"><svg viewBox="0 0 66 66"><rect width="66" height="66" rx="15" fill="#fff"/><path d="M46 8l12 6v38l-12 6-22-22-11 9-5-3V24l5-3 11 9z" fill="#2f75c0"/><path d="M46 8l12 6v38l-12 6z" fill="#4296e2"/><path d="M46 22L30 33l16 12z" fill="#fff"/></svg></div>
        <div class="dock-item has-dot"><svg viewBox="0 0 66 66"><rect x="1" y="1" width="64" height="64" rx="14" fill="#151515" stroke="#b5c2c6" stroke-width="2"/><rect x="5" y="6" width="56" height="54" rx="9" fill="#262626"/><text x="9" y="24" class="term-text">&gt;_</text></svg></div>
        <div class="dock-sep"></div>
        <div class="dock-item has-dot"><svg viewBox="0 0 66 66"><circle cx="33" cy="33" r="33" fill="#63d672"/><path d="M14 23c13-5 28-4 39 2M16 34c11-4 24-3 33 2M18 44c9-3 20-2 28 2" fill="none" stroke="#151515" stroke-width="5" stroke-linecap="round"/></svg></div>
        <div class="dock-item"><svg viewBox="0 0 66 66"><defs><linearGradient id="qt" x1="0" y1="0" x2="0" y2="1"><stop offset="0" stop-color="#52555a"/><stop offset="1" stop-color="#000"/></linearGradient></defs><rect width="66" height="66" rx="15" fill="url(#qt)"/><circle cx="32" cy="31" r="19" fill="#47b8ee" stroke="#b8bcc4" stroke-width="8"/><path d="M36 36l14 22" stroke="#b8bcc4" stroke-width="8"/></svg></div>
        <div class="dock-item"><svg viewBox="0 0 66 66"><defs><linearGradient id="as" x1="0" y1="0" x2="0" y2="1"><stop offset="0" stop-color="#4ab0f0"/><stop offset="1" stop-color="#2464d8"/></linearGradient></defs><rect width="66" height="66" rx="15" fill="url(#as)"/><path d="M28 11l16 30M38 11L20 52M11 41h44M44 41l6 11" stroke="#fff" stroke-width="4.500" stroke-linecap="round"/></svg></div>
        <div class="dock-sep"></div>
        <div class="dock-item dock-trash"><svg viewBox="0 0 66 76"><defs><linearGradient id="tr" x1="0" y1="0" x2="1" y2="0"><stop offset="0" stop-color="#5c5c5e"/><stop offset=".5" stop-color="#8e8e90"/><stop offset="1" stop-color="#626264"/></linearGradient></defs><path d="M6 10l7 60c1 4 39 4 40 0l7-60z" fill="url(#tr)"/><ellipse cx="33" cy="11" rx="28" ry="9" fill="#3a3a3c"/><path d="M8 12l8-10 8 8 8-9 8 8 8-8 10 11-26 6z" fill="#d4d4d6"/></svg></div>
    </footer>
</body>
</html>
```

FILE: styles.css
```css
* {
    box-sizing: border-box;
}
html, body {
    margin: 0;
    height: 100%;
}
body {
    width: 2880px;
    height: 1800px;
    overflow: hidden;
    display: flex;
    flex-direction: column;
    font-family: "Liberation Sans", Arial, sans-serif;
    background: linear-gradient(90deg, #040e1a 0, #050b14 420px, #2c0a20 800px, #3a0a2c 1600px, #3c1018 2400px, #5e2a1c 2880px);
}
p, h1 {
    margin: 0;
}
.icon-defs {
    display: none;
}

/* menu bar */
.menubar {
    height: 48px;
    flex: none;
    display: flex;
    justify-content: space-between;
    align-items: center;
    padding: 0 37px 0 40px;
    color: #f6f4f0;
    font-family: Inter, "Noto Sans", sans-serif;
    font-size: 26px;
    background: linear-gradient(90deg, #5a5a52 0, #7a623c 500px, #a5722a 1100px, #a5722a 1700px, #7a6040 2300px, #55555a 2880px);
}
.menu-left {
    display: flex;
    align-items: center;
    gap: 41px;
    font-size: 25.5px;
}
.apple {
    width: 26px;
    height: 34px;
    fill: #f4f4f4;
    margin-right: -1px;
}
.menu-app {
    font-size: 26px;
    font-weight: 700;
}
.menu-right {
    display: flex;
    align-items: center;
    gap: 37px;
}
.status-broom {
    width: 36px;
    height: 32px;
}
.status-play {
    width: 28px;
    height: 28px;
}
.battery-group {
    display: flex;
    align-items: center;
    gap: 11px;
    font-size: 23px;
}
.battery {
    width: 46px;
    height: 24px;
    padding: 3px;
    border: 2px solid rgba(255, 255, 255, .45);
    border-radius: 6px;
}
.battery-level {
    width: 12px;
    height: 100%;
    background: #f5f5f5;
    border-radius: 3px;
}
.status-wifi {
    width: 34px;
    height: 26px;
}
.status-search {
    width: 26px;
    height: 28px;
    margin-left: 4px;
}
.status-control {
    display: flex;
    flex-direction: column;
    gap: 3px;
    width: 28px;
}
.toggle-off, .toggle-on {
    height: 12px;
    border-radius: 6px;
    display: flex;
    align-items: center;
    padding: 0 2px;
}
.toggle-off {
    border: 2px solid #f5f5f5;
}
.toggle-on {
    background: #f5f5f5;
    justify-content: flex-end;
}
.toggle-off i, .toggle-on i {
    width: 6px;
    height: 6px;
    border-radius: 50%;
    background: #f5f5f5;
}
.toggle-on i {
    background: #76624a;
}
.status-siri {
    width: 28px;
    height: 28px;
    margin-left: -1px;
    border-radius: 50%;
    background: radial-gradient(circle at 55% 50%, #f0f0ff 0, rgba(240, 240, 255, 0) 38%), conic-gradient(#2f9a78, #3c6ac0, #35508c, #c04a90, #8a4a7c, #2f9a78);
}
.status-time {
    margin-left: -2px;
    word-spacing: 1px;
}

/* browser window */
.window {
    height: 1634px;
    flex: none;
    margin-top: 2px;
    border-radius: 22px 22px 20px 20px;
    overflow: hidden;
    display: flex;
    flex-direction: column;
    background: #f2f2f2;
}
.tabstrip {
    height: 84px;
    flex: none;
    display: flex;
    padding-top: 16px;
    background: #202124;
    border-top: 2px solid #5e5f62;
    font-family: Inter, "Noto Sans", sans-serif;
    font-size: 24px;
    color: #f1f3f4;
}
.lights {
    width: 186px;
    height: 52px;
    flex: none;
    display: flex;
    align-items: center;
    gap: 16px;
    padding-left: 42px;
}
.lights i {
    width: 24px;
    height: 24px;
    border-radius: 50%;
}
.light-red {
    background: #ed6a5e;
}
.light-yellow {
    background: #f4bf4f;
}
.light-green {
    background: #61c554;
}
.tab {
    width: 306px;
    flex: none;
    position: relative;
    display: flex;
    align-items: center;
    padding: 0 20px 4px 23px;
    border-radius: 16px 16px 0 0;
}
.tab-active {
    background: #35363a;
}
.tab-sep::after {
    content: "";
    position: absolute;
    right: -1px;
    top: 14px;
    width: 2px;
    height: 40px;
    background: #55565a;
}
.favicon {
    width: 32px;
    height: 32px;
    flex: none;
}
.tab-title {
    width: 172px;
    margin-left: 16px;
    white-space: nowrap;
    overflow: hidden;
    -webkit-mask-image: linear-gradient(90deg, #000 85%, transparent 100%);
    mask-image: linear-gradient(90deg, #000 85%, transparent 100%);
}
.tab-close {
    width: 18px;
    height: 18px;
    margin-left: auto;
    margin-right: 2px;
}
.tab-new {
    width: 92px;
    display: flex;
    align-items: center;
    justify-content: center;
}
.tab-new svg {
    width: 24px;
    height: 24px;
}
.tab-list {
    margin-left: auto;
    width: 64px;
    margin-right: 13px;
    display: flex;
    align-items: center;
    justify-content: center;
}
.tab-list svg {
    width: 20px;
    height: 12px;
}
.toolbar {
    height: 86px;
    flex: none;
    display: flex;
    align-items: center;
    padding: 0 13px 2px 12px;
    background: #35363a;
    border-bottom: 2px solid #4c4d50;
}
.tool-btn {
    width: 64px;
    height: 64px;
    flex: none;
    display: flex;
    align-items: center;
    justify-content: center;
}
.tool-btn svg {
    width: 30px;
    height: 30px;
}
.addressbar {
    flex: 1;
    height: 68px;
    margin: 0 12px;
    display: flex;
    align-items: center;
    padding: 0 3px 0 24px;
    border-radius: 34px;
    background: #202124;
    font-family: Inter, "Noto Sans", sans-serif;
    font-size: 28px;
    color: #f1f3f4;
}
.addr-info {
    width: 24px;
    height: 24px;
    flex: none;
}
.addr-text {
    margin-left: 21px;
    padding-top: 2px;
}
.addr-muted {
    color: #9aa0a6;
}
.addr-actions {
    margin-left: auto;
    display: flex;
}
.tool-right {
    display: flex;
}
.sidepanel {
    width: 28px;
    height: 28px;
    border-style: solid;
    border-color: #f1f3f4;
    border-width: 4px 10px 4px 4px;
}
.avatar {
    width: 44px;
    height: 44px;
    border-radius: 50%;
    background: #e0742c;
    color: #fff;
    font-family: Inter, "Noto Sans", sans-serif;
    font-size: 24px;
    display: flex;
    align-items: center;
    justify-content: center;
}
.kebab {
    display: flex;
    flex-direction: column;
    gap: 4px;
}
.kebab i {
    width: 6px;
    height: 6px;
    border-radius: 50%;
    background: #f1f3f4;
}

/* app page */
.page {
    flex: 1;
    min-height: 0;
    display: flex;
}
.sidebar {
    width: 500px;
    flex: none;
    display: flex;
    flex-direction: column;
}
.side-logo {
    height: 303px;
    flex: none;
    padding-top: 68px;
    background: #fff;
    text-align: center;
}
.logo {
    width: 148px;
    height: 165px;
    margin-left: 2px;
}
.logo-title {
    font-family: "Liberation Serif", serif;
    font-weight: 700;
    font-size: 12.4px;
    fill: #2d2a7c;
}
.logo-small {
    font-size: 5.5px;
    fill: #2d2a7c;
}
.logo-tiny {
    font-size: 4px;
    letter-spacing: 1.5px;
    fill: #2d2a7c;
}
.side-nav {
    width: 498px;
    flex: 1;
    display: flex;
    flex-direction: column;
    background: #fff;
}
.side-foot {
    height: 64px;
    flex: none;
    background: #fff;
}
.nav-link {
    height: 100px;
    flex: none;
    display: flex;
    align-items: center;
    gap: 8px;
    padding-left: 40px;
    font-size: 32px;
    color: #000;
}
.nav-active {
    background: #fae064;
}
.nav-bottom {
    margin-top: auto;
}
.nav-icon {
    width: 32px;
    height: 32px;
    flex: none;
    fill: #000;
}
.nav-icon-wide {
    width: 36px;
}
.content {
    flex: 1;
    min-width: 0;
    padding: 32px 32px 0;
}
.cards {
    display: grid;
    grid-template-columns: repeat(4, 1fr);
    gap: 32px;
}
.card {
    height: 206px;
    padding: 32px;
    border-radius: 20px;
    background: linear-gradient(90deg, #fff 0, #fcf09c 100%);
    box-shadow: 0 8px 14px rgba(0, 0, 0, .1);
}
.card-head {
    height: 38px;
    display: flex;
    align-items: center;
    justify-content: space-between;
}
.card-title {
    display: flex;
    align-items: center;
    gap: 8px;
    font-size: 32px;
}
.card-label {
    margin-top: 21px;
    font-size: 24px;
    line-height: 36px;
    color: #9ca3af;
}
.card-value {
    margin-top: 4px;
    font-size: 32px;
    line-height: 44px;
    font-weight: 700;
}
.page-title {
    margin-top: 40px;
    font-size: 76px;
    line-height: 90px;
    font-weight: 700;
    color: #000;
}
.actions {
    margin-top: 40px;
    display: flex;
    align-items: flex-start;
    justify-content: space-between;
}
.search {
    width: 1158px;
    height: 74px;
    display: flex;
    align-items: center;
    padding-left: 22px;
    background: #fff;
    border: 2px solid #d1d5db;
    border-radius: 8px;
}
.search-icon {
    width: 32px;
    height: 34px;
}
.search-text {
    margin-left: 26px;
    font-size: 32px;
    color: #9ca3af;
}
.add-btn {
    width: 284px;
    height: 74px;
    display: flex;
    align-items: center;
    justify-content: space-between;
    padding: 2px 32px 0 33px;
    border: 0;
    border-radius: 14px;
    background: #fef050;
    color: #000;
    font-family: inherit;
    font-size: 28px;
    box-shadow: 0 8px 14px rgba(0, 0, 0, .14);
}
.add-icon {
    width: 28px;
    height: 28px;
    margin-top: -2px;
    fill: #000;
}
.table {
    margin-top: 40px;
    background: #fff;
}
.table-row {
    display: grid;
    grid-template-columns: repeat(4, 479px) 1fr;
    align-items: center;
    text-align: center;
    border-bottom: 2px solid #e2e2e2;
}
.table-head {
    height: 64px;
    font-size: 24px;
    color: #202124;
}
.table-body {
    height: 66px;
    font-size: 26px;
    color: #202124;
    background: #fafafa;
}
.row-actions {
    display: flex;
    justify-content: center;
    gap: 16px;
    font-size: 26px;
    color: #fff;
}
.btn-edit, .btn-delete {
    height: 46px;
    display: flex;
    align-items: center;
    gap: 6px;
    padding: 0 8px;
    border-radius: 8px;
}
.btn-edit {
    background: #5fc46c;
}
.btn-delete {
    background: #df5550;
}
.btn-edit svg {
    width: 28px;
    height: 26px;
    fill: #fff;
}
.btn-delete svg {
    width: 24px;
    height: 28px;
    fill: #fff;
}
.pager {
    height: 110px;
    display: flex;
    align-items: center;
    justify-content: flex-end;
    padding-right: 16px;
    font-size: 26px;
    color: #757575;
}
.pager-size {
    margin-left: 24px;
}
.pager-caret {
    margin-left: 14px;
    border-left: 9px solid transparent;
    border-right: 9px solid transparent;
    border-top: 10px solid #757575;
}
.pager-range {
    margin-left: 64px;
}
.pager-btns {
    margin-left: 48px;
    display: flex;
}
.pager-btns svg {
    width: 80px;
    height: 48px;
    fill: rgba(0, 0, 0, .18);
}

/* dock */
.dock {
    position: relative;
    width: 1896px;
    height: 102px;
    flex: none;
    margin: 3px auto 0;
    display: flex;
    align-items: flex-start;
    gap: 20px;
    padding: 14px 14px 0 14px;
    border: 2px solid rgba(255, 255, 255, .16);
    border-radius: 30px;
    background: rgba(86, 40, 60, .62);
    box-shadow: 0 -10px 70px rgba(0, 0, 0, .24);
}
.dock-item {
    position: relative;
    width: 66px;
    height: 66px;
    flex: none;
}
.dock-item svg {
    display: block;
    width: 66px;
    height: 66px;
    overflow: visible;
}
.has-dot::after {
    content: "";
    position: absolute;
    left: 30px;
    top: 78px;
    width: 6px;
    height: 7px;
    border-radius: 50%;
    background: #c8a8bc;
}
.dock-item.dock-big svg {
    width: 82px;
    height: 82px;
    margin: -8px 0 0 -8px;
}
.dock-item.dock-trash svg {
    height: 76px;
    margin-top: -4px;
}
.dock-sep {
    width: 20px;
    height: 76px;
    flex: none;
    background: linear-gradient(90deg, transparent 9px, rgba(255, 255, 255, .3) 9px, rgba(255, 255, 255, .3) 11px, transparent 11px);
}
.cal-month {
    font-family: Inter, "Noto Sans", sans-serif;
    font-size: 12px;
    font-weight: 600;
    fill: #fff;
}
.cal-day {
    font-family: Inter, "Noto Sans", sans-serif;
    font-size: 38px;
    font-weight: 300;
    fill: #2c2c2c;
}
.fz-text {
    font-family: "Liberation Sans", sans-serif;
    font-style: italic;
    font-weight: 700;
    font-size: 74px;
    fill: #fff;
}
.term-text {
    font-family: "Liberation Mono", monospace;
    font-size: 18px;
    fill: #e8e8e8;
}
```
